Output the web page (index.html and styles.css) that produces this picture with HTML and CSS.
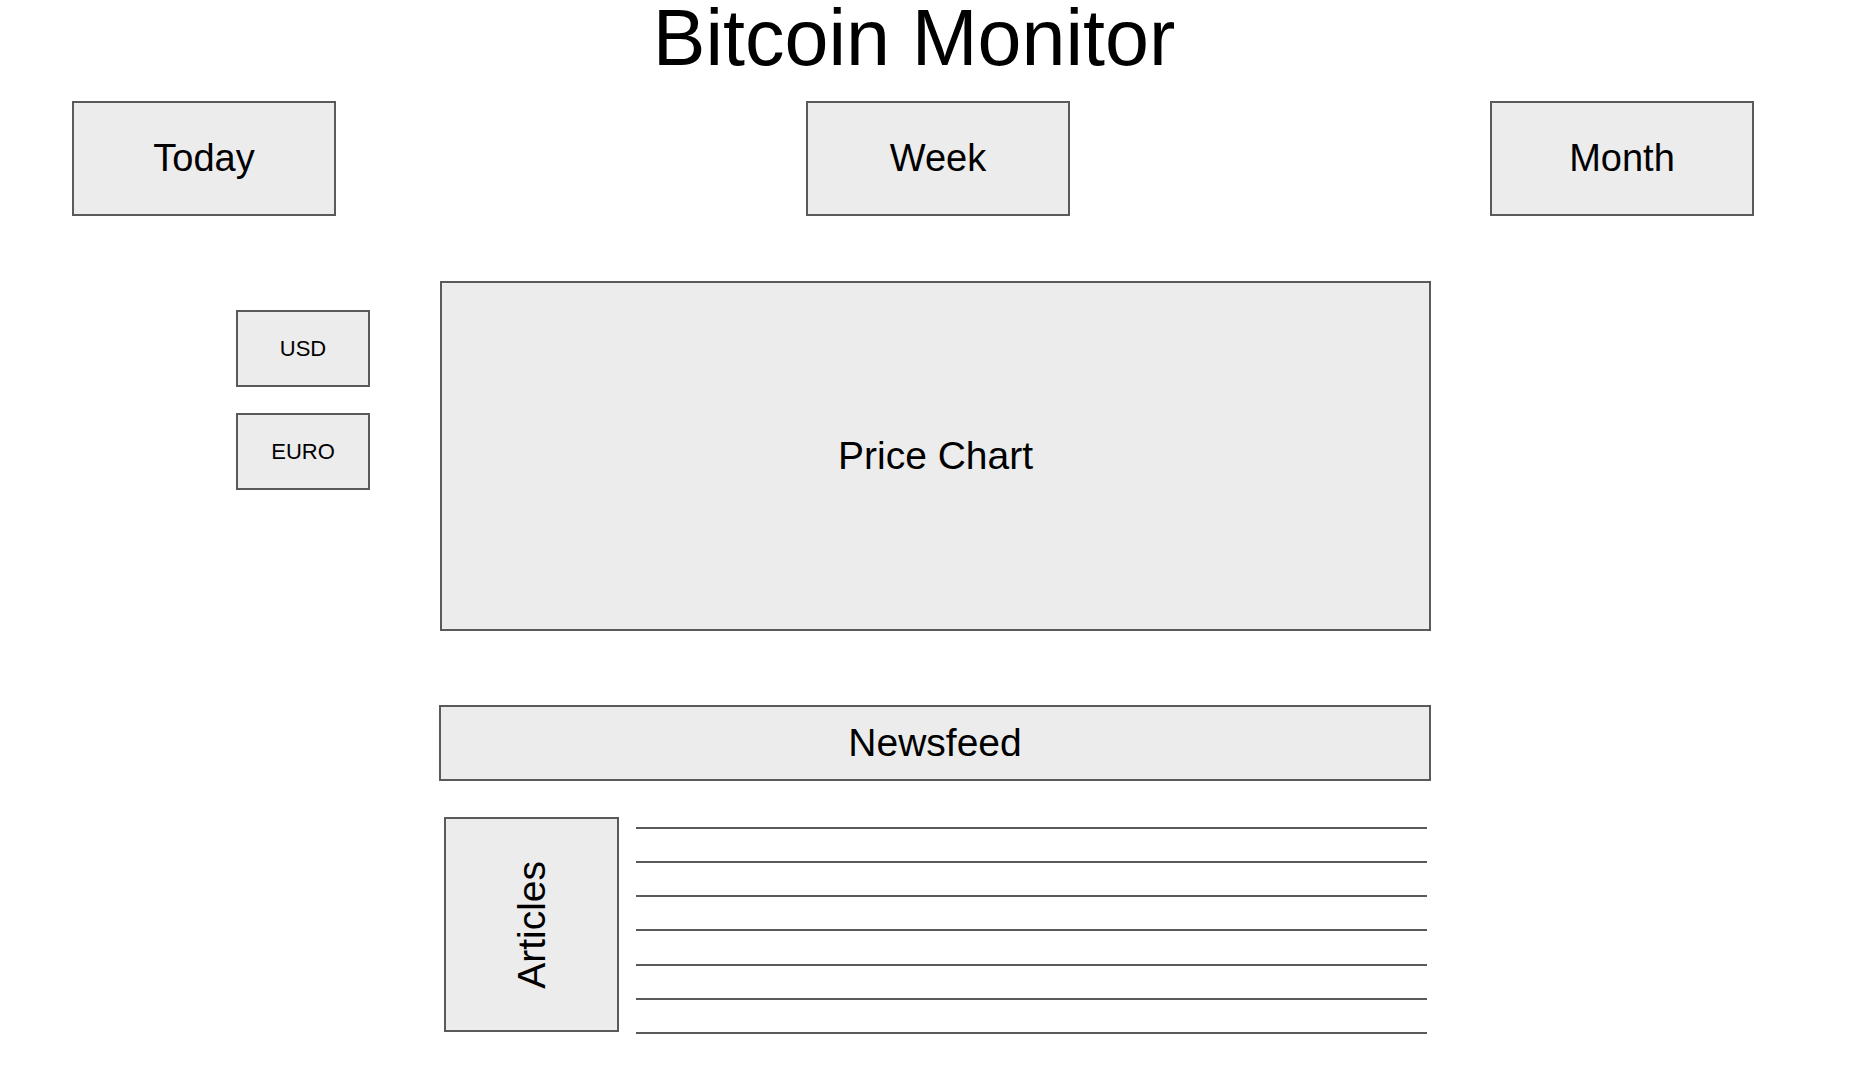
FILE: index.html
```html
<!DOCTYPE html>
<html>
<head>
<meta charset="utf-8">
<title>Bitcoin Monitor</title>
<link rel="stylesheet" href="styles.css">
</head>
<body>
<h1 class="title">Bitcoin Monitor</h1>
<div class="tabs">
  <div class="box tab">Today</div>
  <div class="box tab tab-week">Week</div>
  <div class="box tab tab-month">Month</div>
</div>
<div class="main">
  <div class="currencies">
    <div class="box cur">USD</div>
    <div class="box cur">EURO</div>
  </div>
  <div class="center">
    <div class="box chart">Price Chart</div>
    <div class="box newsfeed">Newsfeed</div>
    <div class="articles-row">
      <div class="box articles"><span class="vtext">Articles</span></div>
      <div class="lines">
        <div class="line"></div>
        <div class="line"></div>
        <div class="line"></div>
        <div class="line"></div>
        <div class="line"></div>
        <div class="line"></div>
        <div class="line"></div>
      </div>
    </div>
  </div>
</div>
</body>
</html>
```

FILE: styles.css
```css
html, body {
  margin: 0;
  padding: 0;
  background: #ffffff;
}
body {
  font-family: "Liberation Sans", Arial, sans-serif;
  color: #000000;
  width: 1859px;
  height: 1092px;
  overflow: hidden;
}
.title {
  margin: 0;
  padding-right: 31px;
  padding-top: 4px;
  text-align: center;
  font-size: 79px;
  font-weight: normal;
  line-height: 68px;
  height: 68px;
}
.box {
  box-sizing: border-box;
  background: #ececec;
  border: 2px solid #5a5a5a;
  display: flex;
  align-items: center;
  justify-content: center;
}
.tabs {
  display: flex;
  margin-top: 29px;
  padding-left: 72px;
}
.tab {
  width: 264px;
  height: 115px;
  font-size: 38px;
}
.tab-week {
  margin-left: 470px;
}
.tab-month {
  margin-left: 420px;
}
.main {
  display: flex;
  margin-top: 65px;
  padding-left: 236px;
}
.currencies {
  display: flex;
  flex-direction: column;
  gap: 26px;
  margin-top: 29px;
  width: 134px;
}
.cur {
  width: 134px;
  height: 77px;
  font-size: 22px;
}
.center {
  margin-left: 69px;
  width: 992px;
  display: flex;
  flex-direction: column;
}
.chart {
  margin-left: 1px;
  width: 991px;
  height: 350px;
  font-size: 39px;
}
.newsfeed {
  margin-top: 74px;
  width: 992px;
  height: 76px;
  font-size: 39px;
}
.articles-row {
  display: flex;
  margin-top: 36px;
  padding-left: 5px;
}
.articles {
  width: 175px;
  height: 215px;
  font-size: 39px;
}
.vtext {
  writing-mode: vertical-rl;
  transform: rotate(180deg);
}
.lines {
  margin-left: 17px;
  margin-top: 10px;
  width: 791px;
  height: 207px;
  display: flex;
  flex-direction: column;
  justify-content: space-between;
}
.line {
  height: 2px;
  background: #5a5a5a;
}
```
